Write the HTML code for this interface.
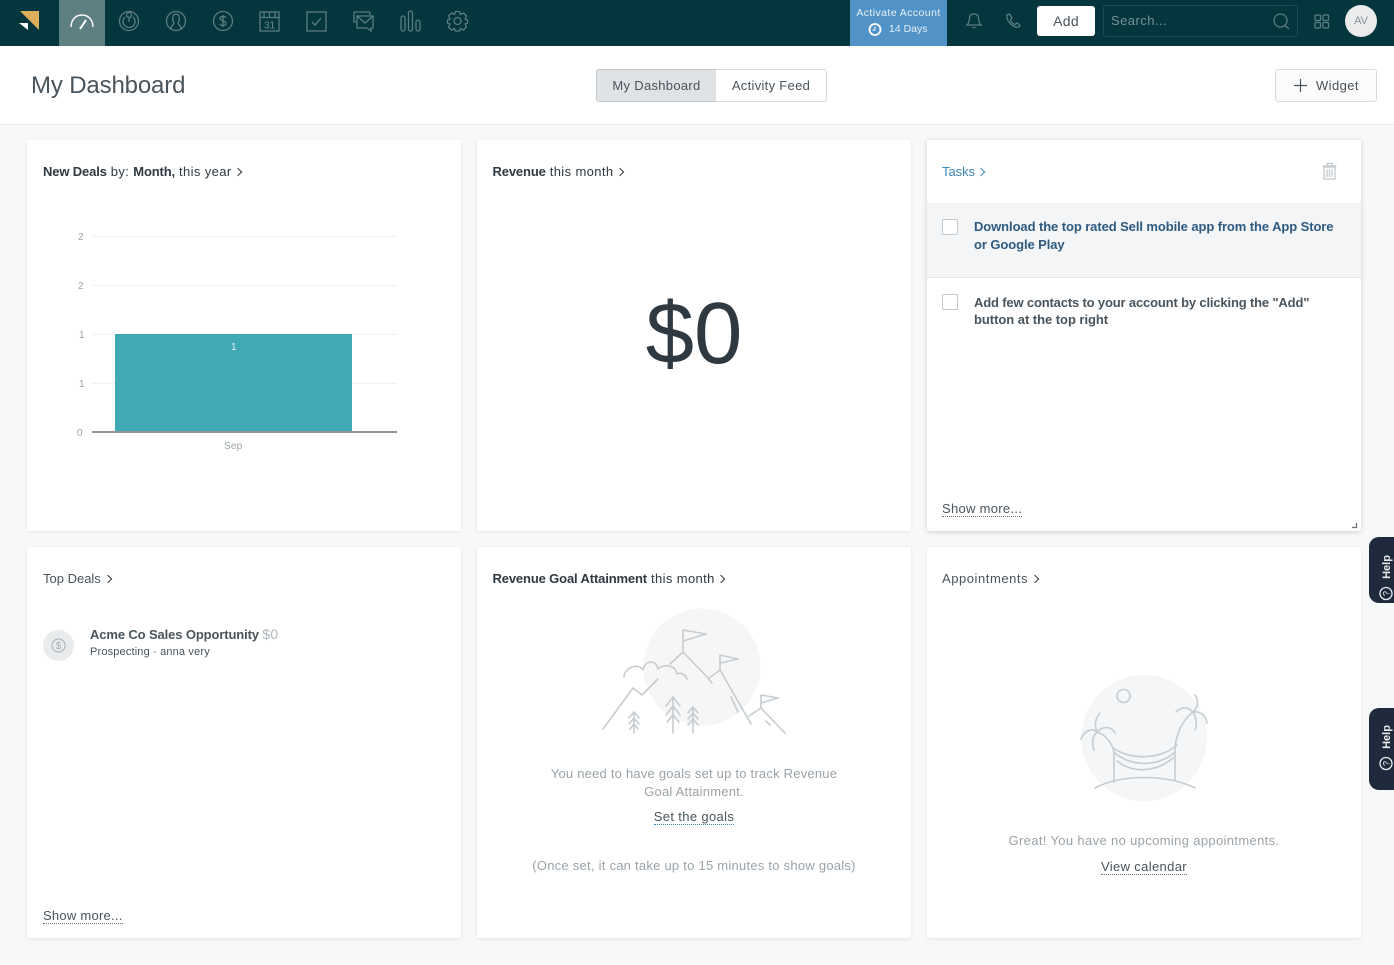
<!DOCTYPE html>
<html><head><meta charset="utf-8"><title>My Dashboard</title>
<style>
html,body{margin:0;padding:0;width:1394px;height:965px;overflow:hidden;background:#f7f8f9;font-family:"Liberation Sans",sans-serif;color:#2f3941}
body{filter:blur(.3px)}
.a{position:absolute;white-space:nowrap}
.card{position:absolute;background:#fff;box-shadow:0 1px 3px rgba(47,57,65,.1);border-radius:2px}
.t{position:absolute;white-space:nowrap;font-size:13px;line-height:18px;letter-spacing:.38px;color:#2f3941}
b{font-weight:bold;letter-spacing:-.14px}
.chev{display:inline-block;width:5px;height:5px;border-top:1.5px solid currentColor;border-right:1.5px solid currentColor;transform:rotate(45deg);margin-left:-.5px;position:relative;top:-1.5px}
.nav{stroke:#5a7d81;fill:none;stroke-width:1.3}
.ax{position:absolute;font-size:10px;color:#9aa3a9;line-height:12px}
.grid{position:absolute;left:92px;width:305px;height:1px;background:#eef0f1}
.link{border-bottom:1px dotted #68737d}
.help{position:absolute;left:1369px;width:25px;background:#1f2b3d;border-radius:10px 0 0 10px}
.help span{position:absolute;transform:rotate(-90deg);transform-origin:center;color:#e9ebed;font-size:11px;font-weight:bold;left:3px;width:30px;text-align:center}
</style></head><body>

<div class="a" style="left:0;top:0;width:1394px;height:46px;background:#03363d"></div>
<div class="a" style="left:59px;top:0;width:46px;height:46px;background:#5f8082"></div>
<div class="a" style="left:850px;top:0;width:97px;height:46px;background:#5293c7"></div>

<svg class="a" style="left:0;top:0" width="480" height="46" viewBox="0 0 480 46">
<polygon points="20,11 39,11 39,30" fill="#dcae5c"/>
<polygon points="19,23 28,23 28,30" fill="#fff"/>
<g fill="none" stroke="#fff" stroke-width="1.4"><path d="M71,27 C71,11 93,11 93,27"/><path d="M80,29 L86,20" stroke-width="2"/></g>
<g class="nav">
<circle cx="129" cy="21" r="9.500"/><path d="M125,17 A6,6 0 1 0 133,17"/><circle cx="129" cy="15" r="2.500"/><path d="M129,17 V22"/>
<circle cx="176" cy="21" r="9.500"/><path d="M171,29 C171,25 174,25 174,23 C172,20 172,14 176,14 C180,14 180,20 178,23 C178,25 181,25 181,29"/>
<circle cx="223" cy="21" r="9.500"/><path d="M226,18 C225,16 220,16 220,18.500 C220,21 226,20.500 226,23.500 C226,26 221,26 220,24 M223,15 V27"/>
<rect x="260" y="12" width="19" height="19"/><path d="M260,17.500 H279 M264,12 V17 M269.500,12 V17 M275,12 V17"/>
<rect x="307" y="12" width="19" height="19"/><path d="M312,22 L315,25 L321,18"/>
<path d="M354,12 H370 V15 M354,12 V22 H357"/><path d="M357,16 H373 V28 H371 V31 L367,28 H357 Z M357,16 L365,23 L373,16"/>
<rect x="401" y="16" width="4" height="15" rx="2"/><rect x="408.500" y="11" width="4" height="20" rx="2"/><rect x="416" y="20" width="4" height="11" rx="2"/>
<circle cx="457.500" cy="21" r="3.500"/><path d="M455.500,11.500 H459.500 L460.500,14.500 L463.500,13 L466.500,16 L465,19 L467.500,20 V23 L465,24 L466.500,27 L463.500,30 L460.500,28.500 L459.500,31 H455.500 L454.500,28.500 L451.500,30 L448.500,27 L450,24 L447.500,23 V20 L450,19 L448.500,16 L451.500,13 L454.500,14.500 Z"/>
</g>
<text x="269.500" y="28.500" text-anchor="middle" font-size="10" fill="#6f9093" font-family="Liberation Sans">31</text>
</svg>

<div class="a" style="left:850px;top:7px;width:97px;text-align:center;color:#e6f0f7;font-size:10.500px;line-height:13px;letter-spacing:.42px">Activate Account</div>
<svg class="a" style="left:867px;top:22px" width="16" height="15"><circle cx="8" cy="7.500" r="5.500" fill="none" stroke="#fff" stroke-width="1.800"/><path d="M8,4.500 V8 H5.500" fill="none" stroke="#fff"/></svg>
<div class="a" style="left:889px;top:23px;color:#e6f0f7;font-size:10.500px;line-height:13px;letter-spacing:0">14 Days</div>

<svg class="a" style="left:960px;top:8px" width="430" height="28" viewBox="960 8 430 28">
<g fill="none" stroke="#5a7d81" stroke-width="1.300">
<path d="M967,25 C969,23 969.500,21 969.500,18 C969.500,15.500 971,14 974,14 C977,14 978.500,15.500 978.500,18 C978.500,21 979,23 981,25 Z M972.500,27.500 H975.500"/>
<path d="M1007,15 L1009.500,14 L1012,18 L1010.500,20 C1011,22 1013,24 1015,24.500 L1017,23 L1020,25.500 L1019,27 C1013,28 1006,21 1007,15 Z"/>
<circle cx="1280.500" cy="20.500" r="6.500"/><path d="M1285,25.500 L1289,29"/>
<rect x="1315" y="15" width="5.500" height="5.500" rx="1"/><rect x="1323" y="15" width="5.500" height="5.500" rx="1"/><rect x="1315" y="22.500" width="5.500" height="5.500" rx="1"/><rect x="1323" y="22.500" width="5.500" height="5.500" rx="1"/>
</g></svg>

<div class="a" style="left:1037px;top:6px;width:58px;height:30px;background:#fff;border-radius:3px;text-align:center;font-size:14px;line-height:30px;letter-spacing:.3px;color:#49545c">Add</div>
<div class="a" style="left:1103px;top:5px;width:193px;height:30px;border:1px solid #1a4d54;border-radius:3px;font-size:13px;line-height:30px;text-indent:7px;letter-spacing:.45px;color:#789093">Search...</div>
<div class="a" style="left:1345px;top:5px;width:32px;height:32px;border-radius:50%;background:#e9ebed;text-align:center;font-size:11px;line-height:32px;color:#87929d">AV</div>

<div class="a" style="left:0;top:46px;width:1394px;height:78px;background:#fff;border-bottom:1px solid #e9ebed"></div>
<div class="a" style="left:31px;top:71px;font-size:24px;line-height:30px;letter-spacing:-.15px;color:#49545c">My Dashboard</div>
<div class="a" style="left:596px;top:69px;width:119px;height:31px;background:#e0e3e6;border:1px solid #c2c8cc;border-radius:3px 0 0 3px;text-align:center;font-size:13px;line-height:32px;letter-spacing:.3px;color:#49545c">My Dashboard</div>
<div class="a" style="left:716px;top:69px;width:110px;height:31px;background:#fff;border:1px solid #d8dcde;border-left:0;border-radius:0 3px 3px 0;text-align:center;font-size:13px;line-height:32px;letter-spacing:.3px;color:#49545c">Activity Feed</div>
<div class="a" style="left:1275px;top:69px;width:100px;height:31px;background:#fbfbfc;border:1px solid #d8dcde;border-radius:3px;font-size:13px;line-height:32px;letter-spacing:.4px;color:#49545c"><span class="a" style="left:40px">Widget</span></div>
<svg class="a" style="left:1293px;top:78px" width="15" height="15"><path d="M7.500,1 V14 M1,7.500 H14" stroke="#49545c" stroke-width="1.200"/></svg>

<div class="card" style="left:27px;top:140px;width:434px;height:391px"></div>
<div class="card" style="left:477px;top:140px;width:434px;height:391px"></div>
<div class="card" style="left:927px;top:140px;width:434px;height:391px;box-shadow:0 1px 5px rgba(47,57,65,.22)"></div>
<div class="card" style="left:27px;top:547px;width:434px;height:391px"></div>
<div class="card" style="left:477px;top:547px;width:434px;height:391px"></div>
<div class="card" style="left:927px;top:547px;width:434px;height:391px"></div>

<div class="t" style="left:43px;top:163px"><b>New Deals</b> by: <b>Month,</b> this year <i class="chev"></i></div>
<div class="grid" style="top:236px"></div><div class="grid" style="top:285px"></div><div class="grid" style="top:334px"></div><div class="grid" style="top:383px"></div>
<div class="ax" style="left:78px;top:232px">2</div><div class="ax" style="left:78px;top:281px">2</div><div class="ax" style="left:79px;top:330px">1</div><div class="ax" style="left:79px;top:379px">1</div><div class="ax" style="left:77px;top:428px">0</div>
<div class="a" style="left:115px;top:334px;width:237px;height:98px;background:#40a9b6"></div>
<div class="a" style="left:92px;top:431px;width:305px;height:1.500px;background:#8f9599"></div>
<div class="ax" style="left:231px;top:342px;color:#e4f3f5">1</div>
<div class="ax" style="left:224px;top:441px;letter-spacing:.2px">Sep</div>

<div class="t" style="left:492.500px;top:163px"><b>Revenue</b> this month <i class="chev"></i></div>
<div class="a" style="left:477px;top:286px;width:434px;text-align:center;font-size:87px;line-height:96px;color:#2f3941">$0</div>

<div class="t" style="left:942px;top:163px;color:#3f86b5;letter-spacing:-.05px">Tasks <i class="chev"></i></div>
<svg class="a" style="left:1321px;top:162px" width="17" height="19"><g fill="none" stroke="#c2c8cc" stroke-width="1.300"><path d="M3,5 H14 V17 H3 Z M1.500,4 H15.500 M6,3.500 V1.500 H11 V3.500 M6,7.500 V15 M8.500,7.500 V15 M11,7.500 V15"/></g></svg>
<div class="a" style="left:927px;top:203px;width:434px;height:74px;background:#f3f5f7;border-bottom:1.500px solid #e3e6e9"></div>
<div class="a" style="left:942px;top:219px;width:14px;height:14px;background:#fff;border:1.500px solid #c2c8cc;border-radius:2px"></div>
<div class="a" style="left:942px;top:294px;width:14px;height:14px;background:#fff;border:1.500px solid #c2c8cc;border-radius:2px"></div>
<div class="t" style="left:974px;top:218px;line-height:17.500px;color:#2e5a80;font-weight:bold;letter-spacing:-.085px">Download the top rated Sell mobile app from the App Store<br>or Google Play</div>
<div class="t" style="left:974px;top:293.500px;line-height:17.500px;color:#49545c;font-weight:bold;letter-spacing:-.16px">Add few contacts to your account by clicking the "Add"<br><span style="letter-spacing:-.04px">button at the top right</span></div>
<div class="t" style="left:942px;top:500px;color:#49545c;letter-spacing:.3px"><span class="link">Show more...</span></div>
<svg class="a" style="left:1350px;top:521px" width="9" height="9"><path d="M6.500,2 V6.500 H2" fill="none" stroke="#68737d" stroke-width="1.300"/></svg>

<div class="t" style="left:43px;top:570px;color:#49545c;letter-spacing:0">Top Deals <i class="chev" style="color:#2f3941;margin-left:1px"></i></div>
<div class="a" style="left:43px;top:630px;width:31px;height:31px;border-radius:50%;background:#e9ebed"></div>
<svg class="a" style="left:50px;top:637px" width="17" height="17"><circle cx="8.500" cy="8.500" r="6.500" fill="none" stroke="#a8b0b5"/><text x="8.500" y="12" text-anchor="middle" font-size="10" fill="#a8b0b5" font-family="Liberation Sans">$</text></svg>
<div class="t" style="left:90px;top:625px;font-weight:bold;letter-spacing:-.12px;color:#49545c">Acme Co Sales Opportunity <span style="font-weight:normal;font-size:14px;letter-spacing:.2px;color:#b0b6bb">$0</span></div>
<div class="t" style="left:90px;top:643px;font-size:11px;letter-spacing:.16px;color:#49545c">Prospecting · anna very</div>
<div class="t" style="left:43px;top:907px;color:#49545c;letter-spacing:.25px"><span class="link">Show more...</span></div>

<div class="t" style="left:492.500px;top:570px"><b>Revenue Goal Attainment</b> this month <i class="chev"></i></div>
<svg class="a" style="left:590px;top:600px" width="210" height="145" viewBox="0 0 210 145">
<circle cx="112" cy="67" r="58.500" fill="#f6f6f7"/>
<g fill="none" stroke="#c6ccd0" stroke-width="1.600" stroke-linecap="round" stroke-linejoin="round">
<path d="M13,129 L43,88 L52,95 L68,79"/>
<path d="M34,77 C34,68 48,62 53,70 C55,60 66,59 68,69 C73,64 85,64 87,74 C91,72 96,75 97,79"/>
<path d="M80,64 L93,52 L118,78 L122,83"/>
<path d="M93,52 V30 L116,34 L93,41"/>
<path d="M119,78 L130,70 L161,124"/>
<path d="M130,70 V55 L148,59 L130,63"/>
<path d="M141,97 L148,112"/>
<path d="M159,116 L171,108 L195,133"/>
<path d="M171,108 V95 L188,98 L171,103"/>
<path d="M176,121 L180,125"/>
<path d="M83,133 V97 M83,97 L76,106 M83,97 L90,106 M83,106 L76,115 M83,106 L90,115 M83,115 L77,122 M83,115 L89,122"/>
<path d="M44,133 V112 M44,112 L39,118 M44,112 L49,118 M44,118 L39,124 M44,118 L49,124 M44,124 L40,129 M44,124 L48,129"/>
<path d="M103,133 V107 M103,107 L98,113 M103,107 L108,113 M103,113 L98,119 M103,113 L108,119 M103,119 L98,125 M103,119 L108,125"/>
</g></svg>
<div class="a" style="left:477px;top:765px;width:434px;text-align:center;font-size:13px;line-height:17.500px;letter-spacing:.22px;color:#9aa3a9">You need to have goals set up to track Revenue<br>Goal Attainment.</div>
<div class="a" style="left:477px;top:808px;width:434px;text-align:center;font-size:13px;line-height:18px;letter-spacing:.35px;color:#49545c"><span class="link" style="border-color:#3f86b5">Set the goals</span></div>
<div class="a" style="left:477px;top:857px;width:434px;text-align:center;font-size:13px;line-height:18px;letter-spacing:.25px;color:#9aa3a9">(Once set, it can take up to 15 minutes to show goals)</div>

<div class="t" style="left:942px;top:570px;color:#49545c;letter-spacing:.55px">Appointments <i class="chev" style="color:#2f3941"></i></div>
<svg class="a" style="left:1060px;top:665px" width="160" height="145" viewBox="0 0 160 145">
<circle cx="84" cy="73" r="63" fill="#f5f6f7"/>
<g fill="none" stroke="#c6ccd0" stroke-width="1.600" stroke-linecap="round">
<circle cx="63.500" cy="31" r="6.500"/>
<path d="M35,123 C60,109 108,109 135,123"/>
<path d="M54,117 V87 C52,78 46,70 37,67"/>
<path d="M37,67 C30,62 24,67 21,74 M37,67 C34,60 35,54 40,48 M37,67 C44,60 52,62 55,68 M37,67 C32,72 32,79 34,85"/>
<path d="M115,115 V83 C116,70 122,55 133,47"/>
<path d="M133,47 C127,41 121,42 116,47 M133,47 C138,42 139,36 135,30 M133,47 C141,46 146,51 147,58 M133,47 C137,53 137,60 135,65"/>
<path d="M53,83 C70,95 100,95 117,80 M55,88 C72,102 98,102 115,87 M57,96 C72,108 95,108 113,93"/>
</g></svg>
<div class="a" style="left:927px;top:832px;width:434px;text-align:center;font-size:13px;line-height:18px;letter-spacing:.35px;color:#9aa3a9">Great! You have no upcoming appointments.</div>
<div class="a" style="left:927px;top:858px;width:434px;text-align:center;font-size:13px;line-height:18px;letter-spacing:.35px;color:#49545c"><span class="link">View calendar</span></div>

<div class="help" style="top:537px;height:66px"><span style="top:24px">Help</span><svg class="a" style="left:10px;top:49px" width="15" height="15"><circle cx="7" cy="7.500" r="6" fill="none" stroke="#e9ebed" stroke-width="1.300"/><text x="7" y="11" text-anchor="middle" font-size="9" fill="#e9ebed" font-family="Liberation Sans" transform="rotate(-90 7 7.500)">?</text></svg></div>
<div class="help" style="top:708px;height:82px"><span style="top:23px">Help</span><svg class="a" style="left:10px;top:48px" width="15" height="15"><circle cx="7" cy="7.500" r="6" fill="none" stroke="#e9ebed" stroke-width="1.300"/><text x="7" y="11" text-anchor="middle" font-size="9" fill="#e9ebed" font-family="Liberation Sans" transform="rotate(-90 7 7.500)">?</text></svg></div>

</body></html>
